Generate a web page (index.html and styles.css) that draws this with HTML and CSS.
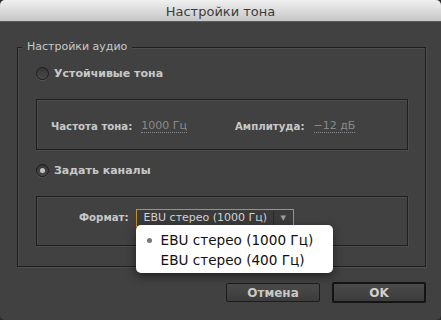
FILE: index.html
```html
<!DOCTYPE html>
<html lang="ru">
<head>
<meta charset="UTF-8">
<title>Настройки тона</title>
<link rel="stylesheet" href="styles.css">
</head>
<body>
<div class="window">
    <div class="titlebar">Настройки тона</div>

    <div class="content">
        <div class="group">
            <div class="legend">Настройки аудио</div>

            <div class="radio-row">
                <span class="radio"></span>
                <span class="label">Устойчивые тона</span>
            </div>
            <div class="box tone-box">
                <span class="label small">Частота тона:</span>
                <span class="value value-freq">1000 Гц</span>
                <span class="label small">Амплитуда:</span>
                <span class="value">−12 дБ</span>
            </div>

            <div class="radio-row row-channels">
                <span class="radio checked"></span>
                <span class="label">Задать каналы</span>
            </div>
            <div class="box format-box">
                <span class="label small">Формат:</span>
                <div class="select">
                    <span class="select-text">EBU стерео (1000 Гц)</span>
                    <span class="select-arrow">▼</span>
                    <ul class="popup">
                        <li class="selected">EBU стерео (1000 Гц)</li>
                        <li>EBU стерео (400 Гц)</li>
                    </ul>
                </div>
            </div>
        </div>

        <div class="buttons">
            <button class="btn">Отмена</button>
            <button class="btn btn-default">OK</button>
        </div>
    </div>
</div>
</body>
</html>
```

FILE: styles.css
```css
html, body {
    margin: 0;
    padding: 0;
    background: #2b2b2b;
}
.window {
    width: 441px;
    height: 320px;
    background: #414141;
    border-radius: 5px;
    overflow: hidden;
    font-family: "DejaVu Sans", sans-serif;
    font-size: 11px;
    color: #c8c8c8;
}
.titlebar {
    height: 21px;
    line-height: 24px;
    text-align: center;
    font-size: 13px;
    color: #3c3c3c;
    background: linear-gradient(#f0f0f0, #c6c6c6);
    border-bottom: 1px solid #5a5a5a;
}
.content {
    padding: 25px 15px 0 17px;
}
.group {
    height: 198px;
    padding: 0 17px 20px 18px;
    border: 1px solid #1f1f1f;
    box-shadow: inset 1px 1px 0 #4d4d4d, 1px 1px 0 #4d4d4d;
}
.legend {
    width: fit-content;
    margin: -8px 0 0 -14px;
    padding: 0 5px;
    line-height: 14px;
    background: #414141;
}
.label {
    font-weight: bold;
}
.label.small {
    font-size: 10.2px;
}
.radio-row {
    display: flex;
    align-items: center;
    gap: 5px;
    height: 16px;
    margin-top: 11px;
}
.row-channels {
    margin-top: 12px;
}
.radio {
    width: 11px;
    height: 11px;
    border: 1px solid #1c1c1c;
    border-radius: 50%;
    background: linear-gradient(#363636, #4a4a4a);
    box-shadow: 0 1px 0 #555;
    position: relative;
}
.radio.checked::after {
    content: "";
    position: absolute;
    left: 3px;
    top: 3px;
    width: 5px;
    height: 5px;
    border-radius: 50%;
    background: #c4c4c4;
}
.box {
    display: flex;
    align-items: center;
    border: 1px solid #1f1f1f;
    box-shadow: inset 1px 1px 0 #4d4d4d, 1px 1px 0 #4d4d4d;
    box-sizing: border-box;
}
.tone-box {
    height: 51px;
    margin-top: 18px;
    padding: 3px 0 0 14px;
}
.value {
    color: #8a8a8a;
    border-bottom: 1px dotted #8a8a8a;
    line-height: 12px;
    margin-left: 9px;
}
.value-freq {
    margin-right: 48px;
}
.format-box {
    height: 50px;
    margin-top: 18px;
    padding: 0 0 7px 42px;
    gap: 7px;
}
.select {
    position: relative;
    display: flex;
    align-items: center;
    width: 158px;
    height: 18px;
    box-sizing: border-box;
    border: 1px solid #c48e2a;
    background: #3b3b3b;
    color: #d4d4d4;
}
.select-text {
    flex: 1;
    padding-left: 7px;
    border-right: 1px solid #2a2a2a;
    line-height: 14px;
}
.select-arrow {
    width: 19px;
    text-align: center;
    font-size: 7px;
    color: #a0a0a0;
}
.popup {
    position: absolute;
    left: -1px;
    top: 15px;
    width: 197px;
    height: 48px;
    box-sizing: border-box;
    margin: 0;
    padding: 5px 0 0 25px;
    list-style: none;
    background: #fff;
    border-radius: 5px;
    box-shadow: 0 3px 10px rgba(0,0,0,0.5);
    color: #111;
    font-size: 13.6px;
    z-index: 2;
}
.popup li {
    line-height: 20px;
    position: relative;
}
.popup li.selected::before {
    content: "";
    position: absolute;
    left: -14px;
    top: 8px;
    width: 5px;
    height: 5px;
    border-radius: 50%;
    background: #777;
}
.buttons {
    display: flex;
    justify-content: flex-end;
    align-items: center;
    gap: 12px;
    margin-top: 15px;
}
.btn {
    width: 94px;
    height: 19px;
    padding: 0;
    font-family: "DejaVu Sans", sans-serif;
    font-size: 12px;
    font-weight: bold;
    color: #c8c8c8;
    background: linear-gradient(#4a4a4a, #3c3c3c);
    border: 1px solid #1c1c1c;
    border-radius: 2px;
}
.btn-default {
    height: 21px;
    border: 2px solid #141414;
    color: #d0d0d0;
}
```
